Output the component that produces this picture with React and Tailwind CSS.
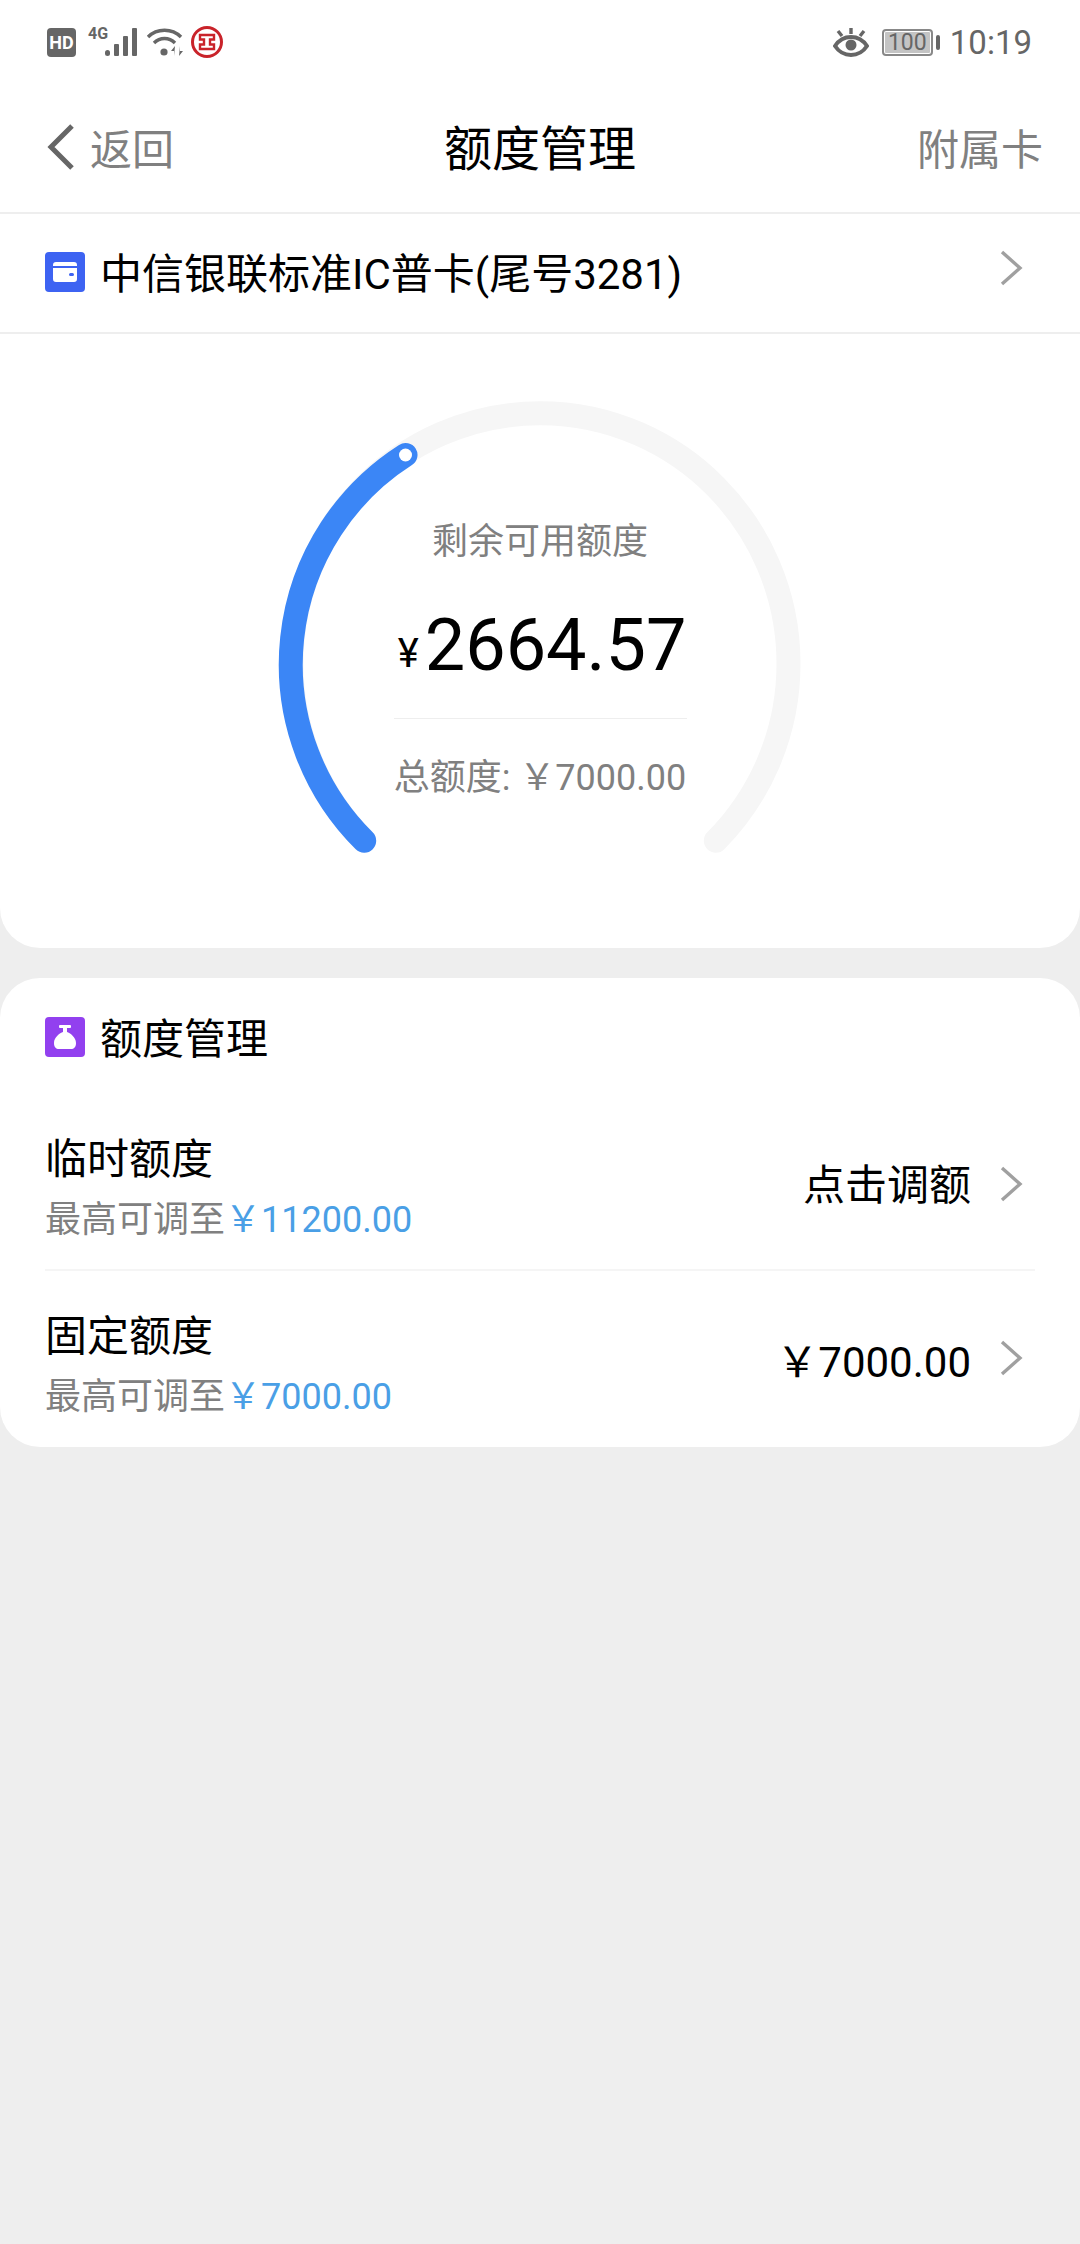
import React from "react";

const Chevron = ({ className = "" }) => (
  <svg width="24" height="36" viewBox="0 0 24 36" fill="none" className={className}>
    <path d="M3 2l18 16L3 34" stroke="#a0a0a0" strokeWidth="3.4" />
  </svg>
);

const StatusBar = () => (
  <div className="flex h-[84px] items-center justify-between pl-[47px] pr-[48px] text-[#666]">
    <div className="flex items-center">
      <div className="flex h-[29px] w-[29px] items-center justify-center rounded-[4px] bg-[#666] text-[18px] font-bold text-white">
        HD
      </div>
      <div className="relative ml-[12px] h-[30px] w-[50px]">
        <span className="absolute left-0 top-[-2px] text-[16px] font-bold leading-[18px]">4G</span>
        <svg width="50" height="30" viewBox="0 0 50 30" fill="#666">
          <rect x="17" y="23" width="5" height="6" rx="2.5" />
          <rect x="26" y="17" width="5" height="12" rx="1" />
          <rect x="35" y="9" width="5" height="20" rx="1" />
          <rect x="44" y="1" width="5" height="28" rx="1" />
        </svg>
      </div>
      <svg width="38" height="30" viewBox="0 0 38 30" fill="none" className="ml-[8px]">
        <path d="M2 10C11 1 26 1 35 10" stroke="#666" strokeWidth="3.4" />
        <path d="M8 16C14 10 23 10 29 16" stroke="#666" strokeWidth="3.4" />
        <circle cx="18" cy="25" r="3.6" fill="#666" />
        <path d="M29 19l-4 5h3v5zM33 29l4-5h-3v-5z" fill="#666" />
      </svg>
      <svg width="34" height="34" viewBox="0 0 34 34" fill="none" className="ml-[6px]">
        <circle cx="17" cy="17" r="14.5" stroke="#c9232a" strokeWidth="3" />
        <path d="M10 10H24V14.500H20V19.500H24V24H10V19.500H14V14.500H10Z" stroke="#c9232a" strokeWidth="2.400" />
      </svg>
    </div>
    <div className="flex items-center">
      <svg width="36" height="30" viewBox="0 0 36 30" fill="none" className="mr-[13px]">
        <path d="M2 19C10 7 26 7 34 19C26 31 10 31 2 19Z" stroke="#666" strokeWidth="4" />
        <circle cx="18" cy="18" r="5.500" fill="#666" />
        <path d="M18 1v6M5 4l4 5M31 4l-4 5" stroke="#666" strokeWidth="3.400" />
      </svg>
      <div className="flex h-[27px] w-[51px] items-center justify-center rounded-[4px] border-2 border-[#888] bg-[linear-gradient(#c4c4c4,#c4c4c4)] bg-clip-content p-[1px] text-[23px] leading-none">
        100
      </div>
      <div className="ml-[3px] h-[15px] w-[4px] rounded-[2px] bg-[#666]" />
      <span className="ml-[10px] text-[33px] leading-none">10:19</span>
    </div>
  </div>
);

const Gauge = () => (
  <div className="grid justify-center">
    <svg width="560" height="560" viewBox="0 0 560 560" fill="none" className="col-start-1 row-start-1">
      <path
        d="M104.200 455.800A248.500 250.500 0 1 1 455.800 455.800"
        stroke="#f6f6f6"
        strokeWidth="24"
        strokeLinecap="round"
      />
      <path
        d="M104.200 455.800A248.500 248.500 0 0 1 145.500 70"
        stroke="#3b86f6"
        strokeWidth="24"
        strokeLinecap="round"
      />
      <circle cx="145.500" cy="70" r="6.500" fill="#fff" />
    </svg>
    <div className="col-start-1 row-start-1 flex flex-col items-center pt-[132px]">
      <div className="text-[36px] leading-[50px] text-[#808080]">剩余可用额度</div>
      <div className="mt-[37px] flex h-[84px] w-[293px] items-center justify-end text-black">
        <span className="mr-[6px] mt-[16px] text-[40px] leading-none">¥</span>
        <span className="text-[72px] leading-none">2664.57</span>
      </div>
      <div className="mt-[30px] h-px w-[293px] bg-[#eee]" />
      <div className="mt-[34px] text-[36px] leading-[50px] text-[#808080]">总额度: ￥7000.00</div>
    </div>
  </div>
);

const LimitRow = ({ title, max, value, divider, chevronClass }) => (
  <div className={`mx-[45px] flex h-[176px] items-center ${divider ? "border-b-2 border-[#f5f5f5]" : ""}`}>
    <div className="flex-1 pt-[15px]">
      <div className="text-[42px] leading-[60px] text-black">{title}</div>
      <div className="text-[36px] leading-[60px] text-[#808080]">
        最高可调至<span className="text-[#4a9fe6]">￥{max}</span>
      </div>
    </div>
    <span className="pt-[7px] text-[42px] leading-[60px] text-black">{value}</span>
    <Chevron className={`ml-[28px] mr-[12px] ${chevronClass}`} />
  </div>
);

export default function App() {
  return (
    <div className="min-h-[2244px] w-[1080px] bg-[#eeeeee] [font-family:Roboto,'Noto_Sans_CJK_SC',sans-serif]">
      <div className="bg-white">
        <StatusBar />
        <div className="relative flex h-[130px] items-center justify-between border-b-2 border-[#eee] pb-[2px] pl-[47px] pr-[37px]">
          <div className="flex items-center">
            <svg width="28" height="46" viewBox="0 0 28 46" fill="none">
              <path d="M25 2L4 23l21 21" stroke="#666" strokeWidth="5" />
            </svg>
            <span className="ml-[15px] pt-[6px] text-[42px] text-[#808080]">返回</span>
          </div>
          <span className="absolute left-0 right-0 pt-[6px] text-center text-[48px] text-black">额度管理</span>
          <span className="pt-[6px] text-[42px] text-[#808080]">附属卡</span>
        </div>
        <div className="flex h-[120px] items-center border-b-2 border-[#eee] pl-[45px] pr-[57px]">
          <div className="mb-[2px] flex h-[40px] w-[40px] items-center justify-center rounded-[4px] bg-[#3d63f2]">
            <svg width="24" height="20" viewBox="0 0 24 20">
              <path d="M3 0h18a3 3 0 0 1 3 3v1H0V3a3 3 0 0 1 3-3zM0 6h24v11a3 3 0 0 1-3 3H3a3 3 0 0 1-3-3z" fill="#fff" />
              <rect x="16" y="11" width="5" height="3" rx="1.500" fill="#3d63f2" />
            </svg>
          </div>
          <span className="ml-[15px] flex-1 pt-[4px] text-[42px] leading-[60px] text-black">中信银联标准IC普卡(尾号3281)</span>
          <Chevron className="mb-[10px]" />
        </div>
      </div>

      <div className="h-[614px] rounded-b-[40px] bg-white pt-[51px]">
        <Gauge />
      </div>

      <div className="mt-[30px] h-[469px] rounded-[40px] bg-white">
        <div className="flex h-[117px] items-start pl-[45px] pt-[39px]">
          <div className="flex h-[40px] w-[40px] items-center justify-center rounded-[4px] bg-[#9240ef]">
            <svg width="22" height="24" viewBox="0 0 22 24" fill="#fff">
              <rect x="5" y="0" width="12" height="3" rx="1" />
              <path d="M9 3h4v4c3 1 9 5 9 11 0 4-2 6-5 6H5c-3 0-5-2-5-6C0 12 6 8 9 7z" />
            </svg>
          </div>
          <span className="ml-[15px] pt-[3px] text-[42px] leading-[40px] text-black">额度管理</span>
        </div>
        <LimitRow title="临时额度" max="11200.00" value="点击调额" divider chevronClass="mt-[4px]" />
        <LimitRow title="固定额度" max="7000.00" value="￥7000.00" chevronClass="mb-[2px]" />
      </div>
    </div>
  );
}
